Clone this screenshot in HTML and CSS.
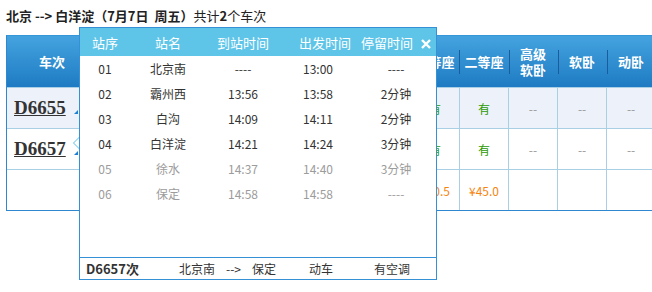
FILE: index.html
```html
<!DOCTYPE html>
<html lang="zh-CN">
<head>
    <meta charset="UTF-8">
    <title>车次查询</title>
    <link rel="stylesheet" href="styles.css">
</head>
<body>
<div class="page">
    <div class="summary"><b>北京 --&gt; 白洋淀（7月7日&nbsp;&nbsp;周五）</b>共计<b>2</b>个车次</div>
    <div class="result">
        <table class="trains">
            <colgroup>
                <col style="width:90px"><col style="width:80px"><col style="width:76px"><col style="width:59px">
                <col style="width:49px"><col style="width:49px"><col style="width:49px"><col style="width:49px">
                <col style="width:49px"><col style="width:49px"><col style="width:49px"><col style="width:49px">
                <col style="width:49px"><col style="width:49px"><col style="width:49px"><col style="width:80px">
            </colgroup>
            <thead>
                <tr>
                    <th>车次</th>
                    <th>出发站<br>到达站</th>
                    <th>出发时间<br>到达时间</th>
                    <th>历时</th>
                    <th>商务座</th>
                    <th>特等座</th>
                    <th>一等座</th>
                    <th>二等座</th>
                    <th>高级<br>软卧</th>
                    <th>软卧</th>
                    <th>动卧</th>
                    <th>硬卧</th>
                    <th>硬座</th>
                    <th>无座</th>
                    <th>其它</th>
                    <th>备注</th>
                </tr>
            </thead>
            <tbody>
                <tr class="odd">
                    <td class="num"><a href="#">D6655</a><i class="mark"></i></td>
                    <td>北京南<br>白洋淀</td>
                    <td>08:10<br>09:28</td>
                    <td>01:18</td>
                    <td class="none">--</td>
                    <td class="none">--</td>
                    <td class="yes">有</td>
                    <td class="yes">有</td>
                    <td class="none">--</td>
                    <td class="none">--</td>
                    <td class="none">--</td>
                    <td class="none">--</td>
                    <td class="none">--</td>
                    <td class="yes">有</td>
                    <td class="none">--</td>
                    <td>预订</td>
                </tr>
                <tr>
                    <td class="num"><a href="#">D6657</a><i class="mark"></i></td>
                    <td>北京南<br>白洋淀</td>
                    <td>13:00<br>14:21</td>
                    <td>01:21</td>
                    <td class="none">--</td>
                    <td class="none">--</td>
                    <td class="yes">有</td>
                    <td class="yes">有</td>
                    <td class="none">--</td>
                    <td class="none">--</td>
                    <td class="none">--</td>
                    <td class="none">--</td>
                    <td class="none">--</td>
                    <td class="yes">有</td>
                    <td class="none">--</td>
                    <td>预订</td>
                </tr>
                <tr>
                    <td class="num"></td>
                    <td></td>
                    <td></td>
                    <td></td>
                    <td></td>
                    <td></td>
                    <td class="price">¥60.5</td>
                    <td class="price">¥45.0</td>
                    <td></td>
                    <td></td>
                    <td></td>
                    <td></td>
                    <td></td>
                    <td class="price">¥45.0</td>
                    <td></td>
                    <td></td>
                </tr>
            </tbody>
        </table>
    </div>

    <div class="stops">
        <div class="stop-body">
            <table class="stop-list">
                <colgroup>
                    <col style="width:50px"><col style="width:76px"><col style="width:74px"><col style="width:76px"><col style="width:80px">
                </colgroup>
                <thead>
                    <tr>
                        <th>站序</th>
                        <th>站名</th>
                        <th>到站时间</th>
                        <th class="depart">出发时间</th>
                        <th>停留时间<svg class="close" width="10" height="10" viewBox="0 0 10 10"><path d="M1 1L9 9M9 1L1 9" stroke="#fff" stroke-width="2.4"/></svg></th>
                    </tr>
                </thead>
                <tbody>
                    <tr><td>01</td><td>北京南</td><td>----</td><td>13:00</td><td>----</td></tr>
                    <tr><td>02</td><td>霸州西</td><td>13:56</td><td>13:58</td><td>2分钟</td></tr>
                    <tr><td>03</td><td>白沟</td><td>14:09</td><td>14:11</td><td>2分钟</td></tr>
                    <tr><td>04</td><td>白洋淀</td><td>14:21</td><td>14:24</td><td>3分钟</td></tr>
                    <tr class="past"><td>05</td><td>徐水</td><td>14:37</td><td>14:40</td><td>3分钟</td></tr>
                    <tr class="past"><td>06</td><td>保定</td><td>14:58</td><td>14:58</td><td>----</td></tr>
                </tbody>
            </table>
        </div>
        <div class="stop-foot">
            <span class="code">D6657次</span>
            <span>北京南<span class="to">--&gt;</span>保定</span>
            <span>动车</span>
            <span>有空调</span>
        </div>
    </div>
</div>
</body>
</html>
```

FILE: styles.css
```css
body {
    margin: 0;
    font-family: "Noto Sans CJK SC", sans-serif;
    font-size: 12px;
    color: #333;
    background: #fff;
}
.page {
    position: relative;
    min-height: 285px;
    padding: 7px 0 0 6px;
}
.summary {
    height: 18px;
    line-height: 18px;
    margin-bottom: 10px;
    font-size: 13px;
    color: #222;
}

/* train list */
.result {
    overflow: hidden;
    border-top: 1px solid #3596d8;
    border-left: 1px solid #2f88cf;
    border-bottom: 1px solid #2f88cf;
}
.trains {
    width: 925px;
    table-layout: fixed;
    border-collapse: collapse;
}
.trains th {
    height: 51px;
    padding: 0;
    color: #fff;
    font-size: 13px;
    font-weight: bold;
    line-height: 16px;
    background: linear-gradient(#44a3df, #1e7bc3);
}
.trains th + th {
    background: linear-gradient(#1b5c9c, #1b5c9c) left center / 1px 24px no-repeat, linear-gradient(#44a3df, #1e7bc3);
}
.trains td {
    height: 40px;
    padding: 0;
    text-align: center;
    border-top: 1px solid #a9cfe4;
    border-left: 1px solid #a9cfe4;
}
.trains td.num {
    border-left: none;
    text-align: left;
    padding-left: 7px;
}
.trains tr.odd td {
    background: #edf1f9;
}
.num a {
    font-family: "Liberation Serif", serif;
    font-size: 19px;
    font-weight: bold;
    line-height: 20px;
    color: #333;
}
.mark {
    display: inline-block;
    width: 0;
    height: 0;
    margin-left: 8px;
    border-left: 4px solid transparent;
    border-bottom: 4px solid #1f7fd0;
}
.yes {
    color: #2a9a00;
}
.none {
    color: #999;
}
.price {
    color: #f7840f;
}

/* stop popup */
.stops {
    position: absolute;
    left: 79px;
    top: 27px;
    width: 356px;
    border: 1px solid #3590d6;
    background: #fff;
}
.stops::before {
    content: "";
    position: absolute;
    left: -7px;
    top: 109px;
    border-right: 6px solid #5bbfe4;
    border-top: 6px solid transparent;
    border-bottom: 6px solid transparent;
}
.stops::after {
    content: "";
    position: absolute;
    left: -6px;
    top: 110px;
    border-right: 5px solid #fff;
    border-top: 5px solid transparent;
    border-bottom: 5px solid transparent;
}
.stop-body {
    height: 229px;
}
.stop-list {
    width: 100%;
    table-layout: fixed;
    border-collapse: collapse;
}
.stop-list th {
    height: 28px;
    padding: 0;
    background: #5fc5e8;
    color: #fff;
    font-size: 13px;
    font-weight: normal;
}
.stop-list th.depart {
    padding-left: 14px;
}
.close {
    margin-left: 8px;
    vertical-align: -1px;
}
.stop-list td {
    height: 25px;
    padding: 0;
    text-align: center;
}
.stop-list tr.past td {
    color: #9c9c9c;
}
.stop-foot {
    display: grid;
    grid-template-columns: 93px 130px 65px auto;
    height: 21px;
    line-height: 21px;
    padding-left: 6px;
    border-top: 1px solid #3590d6;
}
.stop-foot .code {
    font-size: 13px;
    font-weight: bold;
}
.to {
    margin: 0 11px;
}
```
